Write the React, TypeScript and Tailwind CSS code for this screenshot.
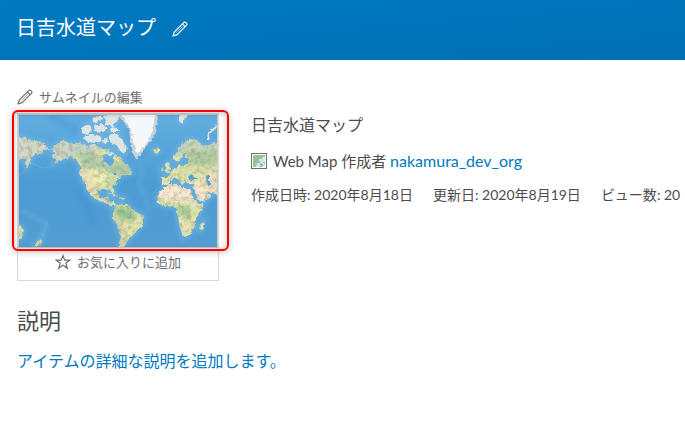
import type { ReactNode } from "react";

function Pencil({ className }: { className: string }) {
  return (
    <svg viewBox="0 0 16 16" className={className} fill="none" stroke="currentColor" strokeWidth="1.2" strokeLinejoin="round" aria-hidden="true">
      <path d="M1 15 L2.4 10.8 L11.4 1.8 Q12.6 0.5 13.8 1.6 L14.4 2.2 Q15.5 3.4 14.2 4.6 L5.2 13.6 Z" />
      <path d="M10.4 2.8 L13.2 5.6" />
      <path d="M4.4 11.6 L11 5" strokeWidth="0.6" />
    </svg>
  );
}

function Star() {
  return (
    <svg viewBox="0 0 16 16" className="size-4 shrink-0" fill="none" stroke="currentColor" strokeWidth="1.2" aria-hidden="true">
      <path d="M8 1.6 L9.7 6.2 H14.8 L10.8 9.3 L12.3 14.2 L8 11.2 L3.7 14.2 L5.2 9.3 L1.2 6.2 H6.3 Z" />
    </svg>
  );
}

function WebMapIcon() {
  return (
    <svg viewBox="0 0 16 16" className="size-4 shrink-0" aria-hidden="true">
      <rect x="0.5" y="0.5" width="15" height="15" fill="#fff" stroke="#6e6e6e" />
      <rect x="2" y="2" width="12" height="12" fill="#9bc19c" />
      <path d="M14 5 V14 H11 V12 H9 V14 H5 V12 H6 V10 H9 V8 H8 V6 H11 V4 H14 Z" fill="#d0e8f5" />
      <path d="M9 10 h2 v1 h1 v2 h-2 v-1 h-1 Z M12 9 h2 v2 h-1 v-1 h-1 Z" fill="#9bc19c" />
    </svg>
  );
}

const land = [
  "M-4 21 L6 23 14 26 23 27 30 34 24 35 23 39 16 38 13 41 11 46 8 53 6 48 9 43 -4 45Z",
  "M34 32 L44 25 51 29 60 28 68 31 74 29 83 33 91 34 90 38 84 40 83 46 89 49 92 53 94 49 94 43 96 39 101 42 104 47 109 51 113 58 109 60 103 60 99 64 97 68 94 72 96 80 92 75 84 74 79 76 80 83 85 84 87 81 90 81 89 86 95 87 98 91 92 91 86 88 78 85 72 80 68 75 67 70 63 64 60 58 62 52 58 46 53 42 47 43 41 46 35 49 38 44 33 41 37 38 32 35Z",
  "M98 90 L108 89 114 95 118 98 125 101 123 110 116 118 109 125 103 134 99 134 102 122 99 112 94 103 94 97Z",
  "M143 75 L141 77 138 83 139 88 146 92 154 91 158 95 159 103 161 113 164 122 169 121 175 113 177 103 181 98 185 89 179 89 174 82 171 74 163 73 158 69 151 69Z",
  "M174 70 L181 68 188 77 192 82 189 84 181 87 176 77Z",
  "M182 108 L185 106 184 112 182 116 180 114Z",
  "M154 43 L158 37 163 29 171 24 179 26 184 31 190 30 202 26 202 79 192 78 186 75 181 69 175 70 168 68 166 65 163 70 160 65 156 63 152 66 149 70 143 69 143 62 150 62 150 58 157 53 160 49 164 51 169 48 170 43 166 43 168 37 164 39 162 44 160 47 157 46Z",
  "M145 56 L150 57 152 54 149 47 146 49 148 53Z M142 54 l3 -2 v4 l-3 0Z",
  "M134 34 L140 34 140 37 136 38Z",
  "M-3 110 L2 111 5 116 3 122 -3 126Z M19 127 L22 124 22 128 17 132 15 131Z",
  "M88 78 L95 79 99 82 95 81Z M100 82 L105 83 103 85Z",
];

const arcticIslands =
  "M63 13 l7 -4 3 6 -5 5 -5 -2Z M65 22 l8 -3 8 2 3 5 -7 2 -8 -1 -5 -3Z M74 3 l7 -3 3 4 -6 4 -5 -1Z M75 11 l8 -2 5 4 -4 4 -8 -1Z M84 1 l10 -3 8 1 -4 7 -5 6 -8 -3 2 -4Z M90 20 l6 -2 6 4 4 7 2 6 -3 4 -5 -4 -4 -6 -6 -2Z M91 12 l7 1 2 4 -7 0Z M84 25 l4 -2 1 4 -4 2Z M88 39 l4 -2 3 2 -4 2Z M160 0 l8 0 -2 5 -3 4 -3 -3Z";

function WorldMap() {
  return (
    <svg viewBox="0 0 198 132" className="block w-full" role="img" aria-label="世界地図">
      <defs>
        <linearGradient id="ocean" x1="0" y1="0" x2="0" y2="1">
          <stop offset="0" stopColor="#62aee0" />
          <stop offset="0.5" stopColor="#4c9cd4" />
          <stop offset="1" stopColor="#539ed3" />
        </linearGradient>
        <filter id="coast" x="-5%" y="-5%" width="110%" height="110%" colorInterpolationFilters="sRGB">
          <feTurbulence type="fractalNoise" baseFrequency="0.28" numOctaves="3" seed="8" />
          <feDisplacementMap in="SourceGraphic" scale="4" xChannelSelector="R" yChannelSelector="G" />
        </filter>
        <filter id="soft" x="-20%" y="-20%" width="140%" height="140%" colorInterpolationFilters="sRGB">
          <feGaussianBlur stdDeviation="2" />
        </filter>
        <filter id="relief" x="0" y="0" width="100%" height="100%" colorInterpolationFilters="sRGB">
          <feTurbulence type="fractalNoise" baseFrequency="0.22" numOctaves="3" seed="4" />
          <feColorMatrix values="0 0 0 0 0.5  0 0 0 0 0.52  0 0 0 0 0.42  1.8 0 0 0 -0.75" />
        </filter>
        <clipPath id="continents">
          {land.map((d) => (
            <path key={d} d={d} />
          ))}
        </clipPath>
      </defs>
      <rect width="198" height="132" fill="url(#ocean)" />
      <g filter="url(#soft)" fill="none" stroke="#7dbce5" strokeOpacity="0.5">
        <g strokeWidth="5">
          {land.map((d) => (
            <path key={d} d={d} />
          ))}
          <path d={arcticIslands} />
        </g>
        <path d="M117 43 L124 55 120 70 127 84 130 97 M0 95 L28 108 M28 108 L22 124" strokeWidth="3" strokeOpacity="0.35" />
        <path d="M30 0 L60 16 M60 76 L75 110" stroke="#2e83c1" strokeWidth="8" strokeOpacity="0.2" />
      </g>
      <path d="M0 60 Q5 58 8 52 M14 48 Q26 58 37 48 M28 107 L24 121" fill="none" stroke="#83b9d9" strokeWidth="0.6" strokeOpacity="0.7" />
      <g filter="url(#coast)">
        <g clipPath="url(#continents)">
          <rect x="-5" y="-5" width="210" height="145" fill="#dfe5ac" />
          <g filter="url(#soft)">
            <path d="M-5 15 H35 V50 H-5Z" fill="#d3d8c8" />
            <path d="M30 23 H108 V36 L80 35 60 39 30 48Z" fill="#cdd6cb" />
            <path d="M55 37 L70 36 83 46 92 51 114 46 114 62 88 57 65 51Z" fill="#afcda8" />
            <path d="M60 55 H70 L77 79 69 80 60 65Z" fill="#ecdcba" />
            <path d="M71 53 L88 56 86 68 72 67Z" fill="#f5f1b5" />
            <path d="M88 62 L101 60 96 73 87 71Z" fill="#c8daa7" />
            <path d="M93 93 L108 92 118 100 110 105 100 104Z" fill="#98c595" />
            <path d="M94 103 L102 111 104 132 99 132Z" fill="#d3c6b8" />
            <path d="M138 68 H181 L194 83 180 90 170 85 138 86Z" fill="#f8e8d2" />
            <path d="M157 91 L170 92 172 98 168 102 159 99Z" fill="#a8cc9a" />
            <path d="M159 107 L170 108 168 120 164 122Z" fill="#f0e0be" />
            <path d="M154 22 H202 V34 L155 40Z" fill="#c9d6bf" />
            <path d="M164 36 L202 35 V50 L172 50Z" fill="#b2cda2" />
            <path d="M184 59 H202 V82 L187 76Z" fill="#f0dfc2" />
          </g>
          <rect width="198" height="132" filter="url(#relief)" opacity="0.6" />
        </g>
        <path d={arcticIslands} fill="#dfe5e3" />
        <path d="M189 25 Q189 16 198 11" fill="none" stroke="#dfe5e3" strokeWidth="2.4" />
        <path d="M99 -4 L140 -4 137 12 135 22 128 30 121 40 118 45 114 39 112 28 110 15 106 8 101 3Z" fill="#ccd2d7" />
        <path d="M101 -4 L137 -4 134 14 129 26 121 37 117 38 114 26 112 14 106 6Z" fill="#f5f8fb" />
        <g fill="#4e9fd6">
          <path d="M169 62 L171 60 176 62 179 64 171 65Z" />
          <path d="M187 61 L190 60 190 65 192 70 189 70Z" />
          <path d="M92 58 l5 0 1 2 -3 0Z" />
        </g>
      </g>
    </svg>
  );
}

function Detail({ label, children }: { label: string; children: ReactNode }) {
  return (
    <li className="whitespace-nowrap">
      {label}: {children}
    </li>
  );
}

export default function App() {
  return (
    <div className="min-h-screen overflow-x-hidden bg-white font-['Lato','Noto_Sans_CJK_JP',sans-serif] text-[#4c4c4c]">
      <header className="flex h-15 items-center gap-4 bg-linear-to-br from-[#007ac2] to-[#006fb4] px-4 pb-1.5 text-white">
        <h1 className="text-xl leading-7">日吉水道マップ</h1>
        <button type="button" aria-label="タイトルの編集" className="mt-1">
          <Pencil className="size-4" />
        </button>
      </header>

      <main className="px-[17px] pt-[27px]">
        <div className="flex items-start gap-8">
          <section className="w-[202px] shrink-0">
            <button type="button" className="flex h-5 items-center gap-1.5 text-[13px] leading-5 text-[#6e6e6e]">
              <Pencil className="size-4" />
              サムネイルの編集
            </button>
            <div className="relative mt-1.5 border border-[#d8d8d8]">
              <div className="border border-[#cccccc]">
                <WorldMap />
              </div>
              <button type="button" className="flex h-8 w-full items-center justify-center gap-1.5 pb-1 text-[13px] leading-5 text-[#6e6e6e]">
                <Star />
                お気に入りに追加
              </button>
              <div className="pointer-events-none absolute -top-1 -right-[11px] -left-1.5 h-[141px] rounded-md border-2 border-[#ff0000] shadow-[0_1px_6px_rgba(0,0,0,0.25),inset_0_1px_6px_rgba(0,0,0,0.25)]" />
            </div>
          </section>

          <section className="min-w-0 flex-1 pt-[26px]">
            <h2 className="text-base leading-6">日吉水道マップ</h2>
            <p className="mt-3 flex items-center gap-1.5 text-[15px] leading-6 whitespace-nowrap">
              <WebMapIcon />
              <span>
                Web Map 作成者{" "}
                <a href="#owner" className="text-base leading-6 text-[#0079c1]">
                  nakamura_dev_org
                </a>
              </span>
            </p>
            <ul className="mt-2.5 flex gap-5 text-sm leading-6">
              <Detail label="作成日時">2020年8月18日</Detail>
              <Detail label="更新日">2020年8月19日</Detail>
              <Detail label="ビュー数">20</Detail>
            </ul>
          </section>
        </div>

        <section className="mt-6">
          <h2 className="text-[22px] leading-8">説明</h2>
          <button type="button" className="mt-3 block text-base leading-6 text-[#0079c1]">
            アイテムの詳細な説明を追加します。
          </button>
        </section>
      </main>
    </div>
  );
}
